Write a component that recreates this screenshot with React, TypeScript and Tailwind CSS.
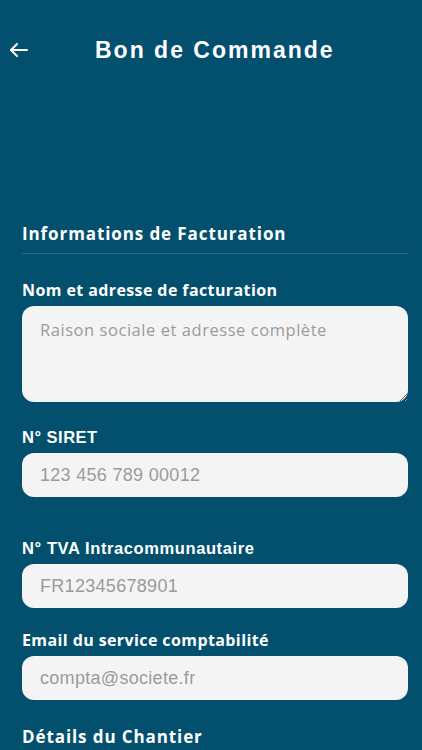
import React from 'react';

const sans = "font-['Open_Sans',sans-serif]";
const arial = "font-['Liberation_Sans',Arial,sans-serif]";

const App: React.FC = () => {
  return (
    <div className="min-h-[750px] w-full bg-[#03506e] text-white overflow-hidden">
      {/* Header */}
      <div className="flex items-center h-[100px] pl-[9px]">
        <svg width="20" height="16" viewBox="0 0 20 16" fill="none" stroke="white" strokeWidth="2" strokeLinecap="round" strokeLinejoin="round">
          <path d="M18 8H2" />
          <path d="M8 2L2 8l6 6" />
        </svg>
        <h1 className={`${arial} ml-[66px] text-[23px] font-bold tracking-[2px] leading-none`}>
          Bon de Commande
        </h1>
      </div>

      <div className="pl-[22px] pr-[14px]">
        <h2 className={`${sans} mt-[122px] text-[17px] tracking-[0.9px] leading-[24px] font-bold pb-[7px] border-b border-[#2b6b87]`}>
          Informations de Facturation
        </h2>

        <label className={`${sans} block mt-[26px] mb-[6px] text-[16px] tracking-[0.4px] leading-[20px] font-bold`}>
          Nom et adresse de facturation
        </label>
        <textarea
          className={`${sans} block w-full h-[96px] rounded-[12px] bg-[#f4f4f5] px-[18px] pt-[13px] text-[16.5px] tracking-[0.55px] leading-[22px] text-gray-800 placeholder:text-[#9b9b9b] outline-none`}
          placeholder="Raison sociale et adresse complète"
        />

        <label className={`${arial} block mt-[25px] mb-[6px] text-[16.5px] tracking-[0.5px] leading-[20px] font-bold`}>
          N° SIRET
        </label>
        <input
          className={`${arial} block w-full h-[44px] rounded-[12px] bg-[#f4f4f5] px-[18px] text-[18px] tracking-[0.3px] text-gray-800 placeholder:text-[#9b9b9b] outline-none`}
          placeholder="123 456 789 00012"
        />

        <label className={`${arial} block mt-[41px] mb-[6px] text-[16.5px] tracking-[0.6px] leading-[20px] font-bold`}>
          N° TVA Intracommunautaire
        </label>
        <input
          className={`${arial} block w-full h-[44px] rounded-[12px] bg-[#f4f4f5] px-[18px] text-[18px] tracking-[0.3px] text-gray-800 placeholder:text-[#9b9b9b] outline-none`}
          placeholder="FR12345678901"
        />

        <label className={`${sans} block mt-[22px] mb-[6px] text-[16px] tracking-[0.4px] leading-[20px] font-bold`}>
          Email du service comptabilité
        </label>
        <input
          className={`${arial} block w-full h-[44px] rounded-[12px] bg-[#f4f4f5] px-[18px] text-[18px] tracking-[0.3px] text-gray-800 placeholder:text-[#9b9b9b] outline-none`}
          placeholder="compta@societe.fr"
        />

        <h2 className={`${sans} mt-[25px] text-[17px] tracking-[0.9px] leading-[24px] font-bold`}>
          Détails du Chantier
        </h2>
      </div>
    </div>
  );
};

export default App;
